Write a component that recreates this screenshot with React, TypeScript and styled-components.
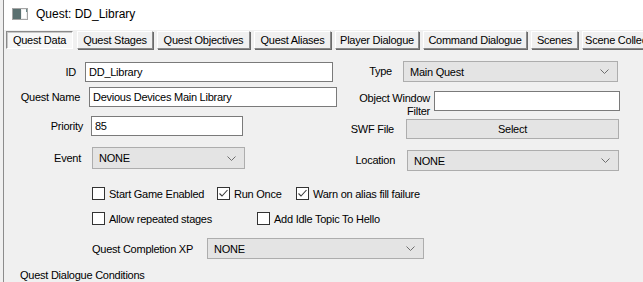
import React from "react";
import styled, { createGlobalStyle } from "styled-components";

const Global = createGlobalStyle`
  html, body { margin: 0; padding: 0; background: #f0f0f0; }
  body {
    font-family: "Liberation Sans", Arial, sans-serif;
    font-size: 11px;
    letter-spacing: -0.25px;
    color: #000;
    overflow: hidden;
  }
  * { box-sizing: border-box; }
`;

const Window = styled.div`
  display: flex;
  width: 643px;
  height: 282px;
  background: #f0f0f0;
`;

const Edge = styled.div`
  width: 4px;
  flex: none;
  background: #f0f0f0;
  border-right: 1px solid #8c8c8c;
`;

const Main = styled.div`
  flex: 1;
  display: flex;
  flex-direction: column;
  min-width: 0;
`;

const TitleBar = styled.div`
  height: 30px;
  background: #ffffff;
  display: flex;
  align-items: center;
  padding-left: 8px;
  gap: 8px;
  font-size: 12px;
  letter-spacing: 0;
  padding-bottom: 2px;
`;

const TabRow = styled.div`
  height: 20px;
  display: flex;
  gap: 4px;
  padding: 1px 0 0 2px;
  white-space: nowrap;
  overflow: hidden;
`;

const Tab = styled.div<{ $w: number; $active?: boolean }>`
  flex: none;
  width: ${(p) => p.$w}px;
  height: 18px;
  display: flex;
  align-items: center;
  justify-content: center;
  background: ${(p) => (p.$active ? "#f7f7f7" : "#f0f0f0")};
  border-style: solid;
  border-width: 1px;
  border-color: ${(p) =>
    p.$active ? "#8a8a8a #ffffff #ffffff #8a8a8a" : "#ffffff #8a8a8a #8a8a8a #ffffff"};
  box-shadow: ${(p) =>
    p.$active ? "inset 1px 1px 0 #c8c8c8" : "1px 1px 0 #6a6a6a"};
`;

const Content = styled.div`
  display: flex;
  flex-direction: column;
`;

const Fields = styled.div`
  display: flex;
`;

const LeftCol = styled.div`
  width: 346px;
  padding-left: 10px;
  display: flex;
  flex-direction: column;
`;

const RightCol = styled.div`
  display: flex;
  flex-direction: column;
`;

const Row = styled.div<{ $mt: number; $gap: number; $h: number }>`
  display: flex;
  align-items: center;
  margin-top: ${(p) => p.$mt}px;
  gap: ${(p) => p.$gap}px;
  height: ${(p) => p.$h}px;
`;

const Label = styled.div<{ $w: number }>`
  width: ${(p) => p.$w}px;
  flex: none;
  text-align: right;
  line-height: 13px;
  white-space: nowrap;
`;

const TextBox = styled.div<{ $w: number; $h: number }>`
  width: ${(p) => p.$w}px;
  height: ${(p) => p.$h}px;
  background: #ffffff;
  border: 1px solid #7a7a7a;
  display: flex;
  align-items: center;
  padding-left: 3px;
  flex: none;
  align-self: flex-start;
`;

const Combo = styled.div<{ $w: number; $h: number }>`
  width: ${(p) => p.$w}px;
  height: ${(p) => p.$h}px;
  background: #e4e4e4;
  border: 1px solid #adadad;
  display: flex;
  align-items: center;
  justify-content: space-between;
  padding: 0 8px 0 6px;
  flex: none;
`;

const Button = styled.div<{ $w: number; $h: number }>`
  width: ${(p) => p.$w}px;
  height: ${(p) => p.$h}px;
  background: #e4e4e4;
  border: 1px solid #adadad;
  display: flex;
  align-items: center;
  justify-content: center;
  flex: none;
`;

const CheckRow = styled.div<{ $mt: number }>`
  display: flex;
  align-items: center;
  margin-top: ${(p) => p.$mt}px;
  padding-left: 88px;
  height: 15px;
`;

const CheckItem = styled.div<{ $w?: number }>`
  display: flex;
  align-items: center;
  gap: 4px;
  width: ${(p) => (p.$w ? `${p.$w}px` : "auto")};
  flex: none;
  white-space: nowrap;
`;

const Box = styled.div`
  width: 13px;
  height: 13px;
  background: #ffffff;
  border: 1px solid #333333;
  display: flex;
  align-items: center;
  justify-content: center;
`;

const XpRow = styled.div`
  display: flex;
  align-items: center;
  margin-top: 12px;
  padding-left: 88px;
  height: 21px;
`;

const XpLabel = styled.div`
  width: 115px;
  flex: none;
`;

const Footer = styled.div`
  margin-top: 10px;
  padding-left: 16px;
`;

const Chevron = () => (
  <svg width="9" height="5" viewBox="0 0 9 5">
    <path d="M0.5 0.5 L4.5 4.5 L8.5 0.5" fill="none" stroke="#6e6e6e" strokeWidth="1" />
  </svg>
);

const Check = () => (
  <svg width="11" height="11" viewBox="0 0 11 11">
    <path d="M1.5 5.5 L4 8 L9.5 2" fill="none" stroke="#3a3a3a" strokeWidth="1.1" />
  </svg>
);

const AppIcon = () => (
  <svg width="16" height="12" viewBox="0 0 16 12">
    <rect x="0.5" y="0.5" width="15" height="11" fill="#eeeeee" stroke="#a5a5a5" />
    <rect x="1" y="1" width="8" height="10" fill="#5a7070" />
    <rect x="10" y="2" width="4" height="8" fill="#ffffff" />
    <rect x="14" y="1" width="1" height="3" fill="#6a8a8a" />
  </svg>
);

const tabs = [
  { t: "Quest Data", w: 67, active: true },
  { t: "Quest Stages", w: 76 },
  { t: "Quest Objectives", w: 93 },
  { t: "Quest Aliases", w: 77 },
  { t: "Player Dialogue", w: 84 },
  { t: "Command Dialogue", w: 104 },
  { t: "Scenes", w: 47 },
  { t: "Scene Collections", w: 90 },
];

const Checkbox = ({ label, checked, w }: { label: string; checked?: boolean; w?: number }) => (
  <CheckItem $w={w}>
    <Box>{checked && <Check />}</Box>
    <span>{label}</span>
  </CheckItem>
);

export default function App() {
  return (
    <>
      <Global />
      <Window>
        <Edge />
        <Main>
          <TitleBar>
            <AppIcon />
            <span>Quest: DD_Library</span>
          </TitleBar>
          <TabRow>
            {tabs.map((t) => (
              <Tab key={t.t} $w={t.w} $active={t.active}>
                {t.t}
              </Tab>
            ))}
          </TabRow>
          <Content>
            <Fields>
              <LeftCol>
                <Row $mt={12} $gap={9} $h={20}>
                  <Label $w={62}>ID</Label>
                  <TextBox $w={248} $h={20}>DD_Library</TextBox>
                </Row>
                <Row $mt={5} $gap={9} $h={20}>
                  <Label $w={66}>Quest Name</Label>
                  <TextBox $w={248} $h={20}>Devious Devices Main Library</TextBox>
                </Row>
                <Row $mt={9} $gap={8} $h={20}>
                  <Label $w={69}>Priority</Label>
                  <TextBox $w={152} $h={20}>85</TextBox>
                </Row>
                <Row $mt={11} $gap={11} $h={22}>
                  <Label $w={67}>Event</Label>
                  <Combo $w={153} $h={22}>
                    <span>NONE</span>
                    <Chevron />
                  </Combo>
                </Row>
              </LeftCol>
              <RightCol>
                <Row $mt={11} $gap={11} $h={21}>
                  <Label $w={42}>Type</Label>
                  <Combo $w={215} $h={21}>
                    <span>Main Quest</span>
                    <Chevron />
                  </Combo>
                </Row>
                <Row $mt={9} $gap={4} $h={27}>
                  <Label $w={80}>
                    Object Window
                    <br />
                    Filter
                  </Label>
                  <TextBox $w={186} $h={20} />
                </Row>
                <Row $mt={1} $gap={12} $h={20}>
                  <Label $w={44}>SWF File</Label>
                  <Button $w={213} $h={20}>Select</Button>
                </Row>
                <Row $mt={11} $gap={12} $h={21}>
                  <Label $w={45}>Location</Label>
                  <Combo $w={212} $h={21}>
                    <span>NONE</span>
                    <Chevron />
                  </Combo>
                </Row>
              </RightCol>
            </Fields>
            <CheckRow $mt={15}>
              <Checkbox label="Start Game Enabled" w={125} />
              <Checkbox label="Run Once" checked w={79} />
              <Checkbox label="Warn on alias fill failure" checked />
            </CheckRow>
            <CheckRow $mt={10}>
              <Checkbox label="Allow repeated stages" w={165} />
              <Checkbox label="Add Idle Topic To Hello" />
            </CheckRow>
            <XpRow>
              <XpLabel>Quest Completion XP</XpLabel>
              <Combo $w={217} $h={21}>
                <span>NONE</span>
                <Chevron />
              </Combo>
            </XpRow>
            <Footer>Quest Dialogue Conditions</Footer>
          </Content>
        </Main>
      </Window>
    </>
  );
}
